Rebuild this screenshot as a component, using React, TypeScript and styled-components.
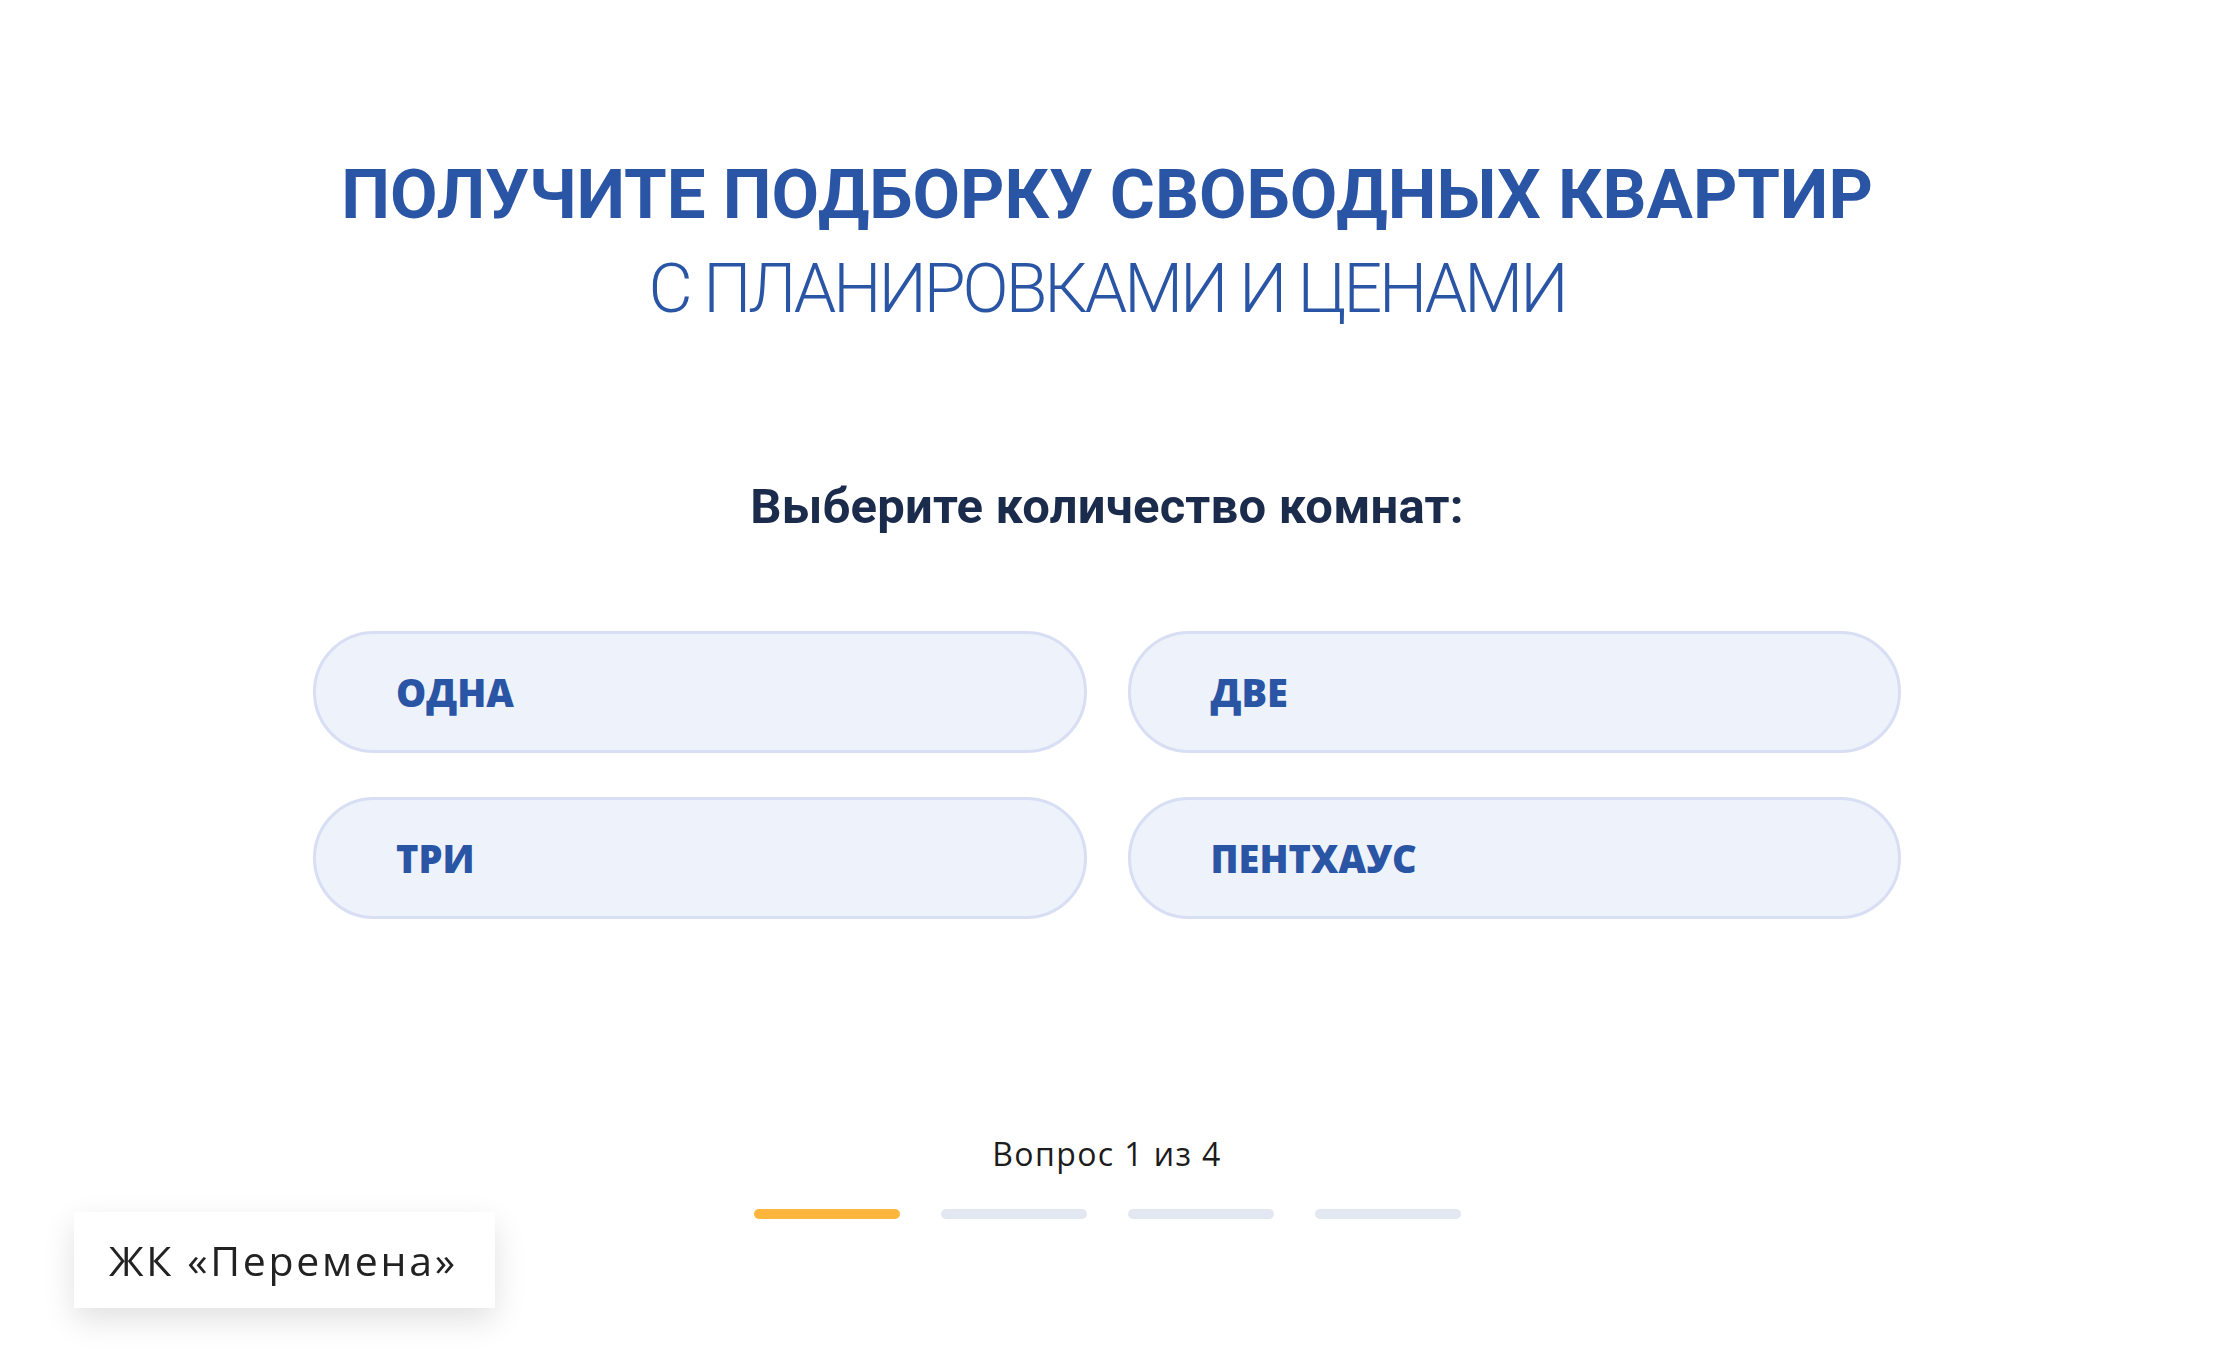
import React, { useState } from "react";
import styled, { createGlobalStyle } from "styled-components";

const GlobalStyle = createGlobalStyle`
  html, body {
    margin: 0;
    padding: 0;
    background: #ffffff;
  }
  body {
    font-family: "Open Sans", "DejaVu Sans", sans-serif;
  }
`;

const options = ["ОДНА", "ДВЕ", "ТРИ", "ПЕНТХАУС"];
const steps = 4;

export default function App() {
  const [current] = useState(1);
  const [selected, setSelected] = useState<string | null>(null);

  return (
    <>
      <GlobalStyle />
      <SPage>
        <STitle>
          <span className="strong">Получите подборку свободных квартир</span>
          <span className="light">с планировками и ценами</span>
        </STitle>

        <SQuestion>Выберите количество комнат:</SQuestion>

        <SOptions>
          {options.map((o) => (
            <SOption
              key={o}
              type="button"
              $active={selected === o}
              onClick={() => setSelected(o)}
            >
              {o}
            </SOption>
          ))}
        </SOptions>

        <SProgress>
          <div className="progress-label">
            Вопрос {current} из {steps}
          </div>
          <div className="progress-bars">
            {Array.from({ length: steps }).map((_, i) => (
              <SBar key={i} $done={i < current} />
            ))}
          </div>
        </SProgress>
      </SPage>

      <SBadge>ЖК «Перемена»</SBadge>
    </>
  );
}

const SPage = styled.main`
  min-height: 1371px;
  box-sizing: border-box;
  padding-top: 147px;
  display: flex;
  flex-direction: column;
  align-items: center;
`;

const STitle = styled.h1`
  margin: 0;
  display: flex;
  flex-direction: column;
  align-items: center;
  font-family: Roboto, "Liberation Sans", sans-serif;
  line-height: 95px;
  text-transform: uppercase;
  color: #2a55a5;

  .strong {
    font-size: 69px;
    font-weight: 700;
    letter-spacing: 0;
  }

  .light {
    font-size: 68px;
    font-weight: 300;
    letter-spacing: -3px;
  }
`;

const SQuestion = styled.h2`
  margin: 140px 0 0;
  font-family: Roboto, "Liberation Sans", sans-serif;
  font-weight: 700;
  font-size: 49px;
  letter-spacing: 0.2px;
  line-height: 60px;
  color: #1b2b4b;
`;

const SOptions = styled.div`
  margin-top: 94px;
  width: 1588px;
  display: grid;
  grid-template-columns: 1fr 1fr;
  column-gap: 41px;
  row-gap: 44px;
`;

const SOption = styled.button<{ $active?: boolean }>`
  height: 122px;
  box-sizing: border-box;
  padding: 0 0 0 80px;
  border: 3px solid ${(p) => (p.$active ? "#2a55a5" : "#d8def3")};
  border-radius: 61px;
  background: #eef2fa;
  display: flex;
  align-items: center;
  font-family: "Open Sans", sans-serif;
  font-weight: 800;
  font-size: 38px;
  letter-spacing: 0;
  color: #2a55a5;
  cursor: pointer;
  text-align: left;
`;

const SProgress = styled.div`
  margin-top: 215px;
  display: flex;
  flex-direction: column;
  align-items: center;

  .progress-label {
    font-family: "Open Sans", sans-serif;
    font-size: 32px;
    letter-spacing: 1.4px;
    line-height: 40px;
    color: #1c1c1c;
  }

  .progress-bars {
    margin-top: 35px;
    display: flex;
    gap: 41px;
  }
`;

const SBar = styled.span<{ $done?: boolean }>`
  display: block;
  width: 146px;
  height: 10px;
  border-radius: 5px;
  background: ${(p) => (p.$done ? "#ffb63c" : "#e3e7f1")};
`;

const SBadge = styled.div`
  position: fixed;
  left: 74px;
  bottom: 63px;
  width: 421px;
  height: 96px;
  box-sizing: border-box;
  padding-left: 35px;
  display: flex;
  align-items: center;
  background: #ffffff;
  box-shadow: 0 12px 30px rgba(0, 0, 0, 0.12);
  font-family: "Open Sans", sans-serif;
  font-weight: 400;
  font-size: 41px;
  letter-spacing: 2.7px;
  color: #222222;
`;
